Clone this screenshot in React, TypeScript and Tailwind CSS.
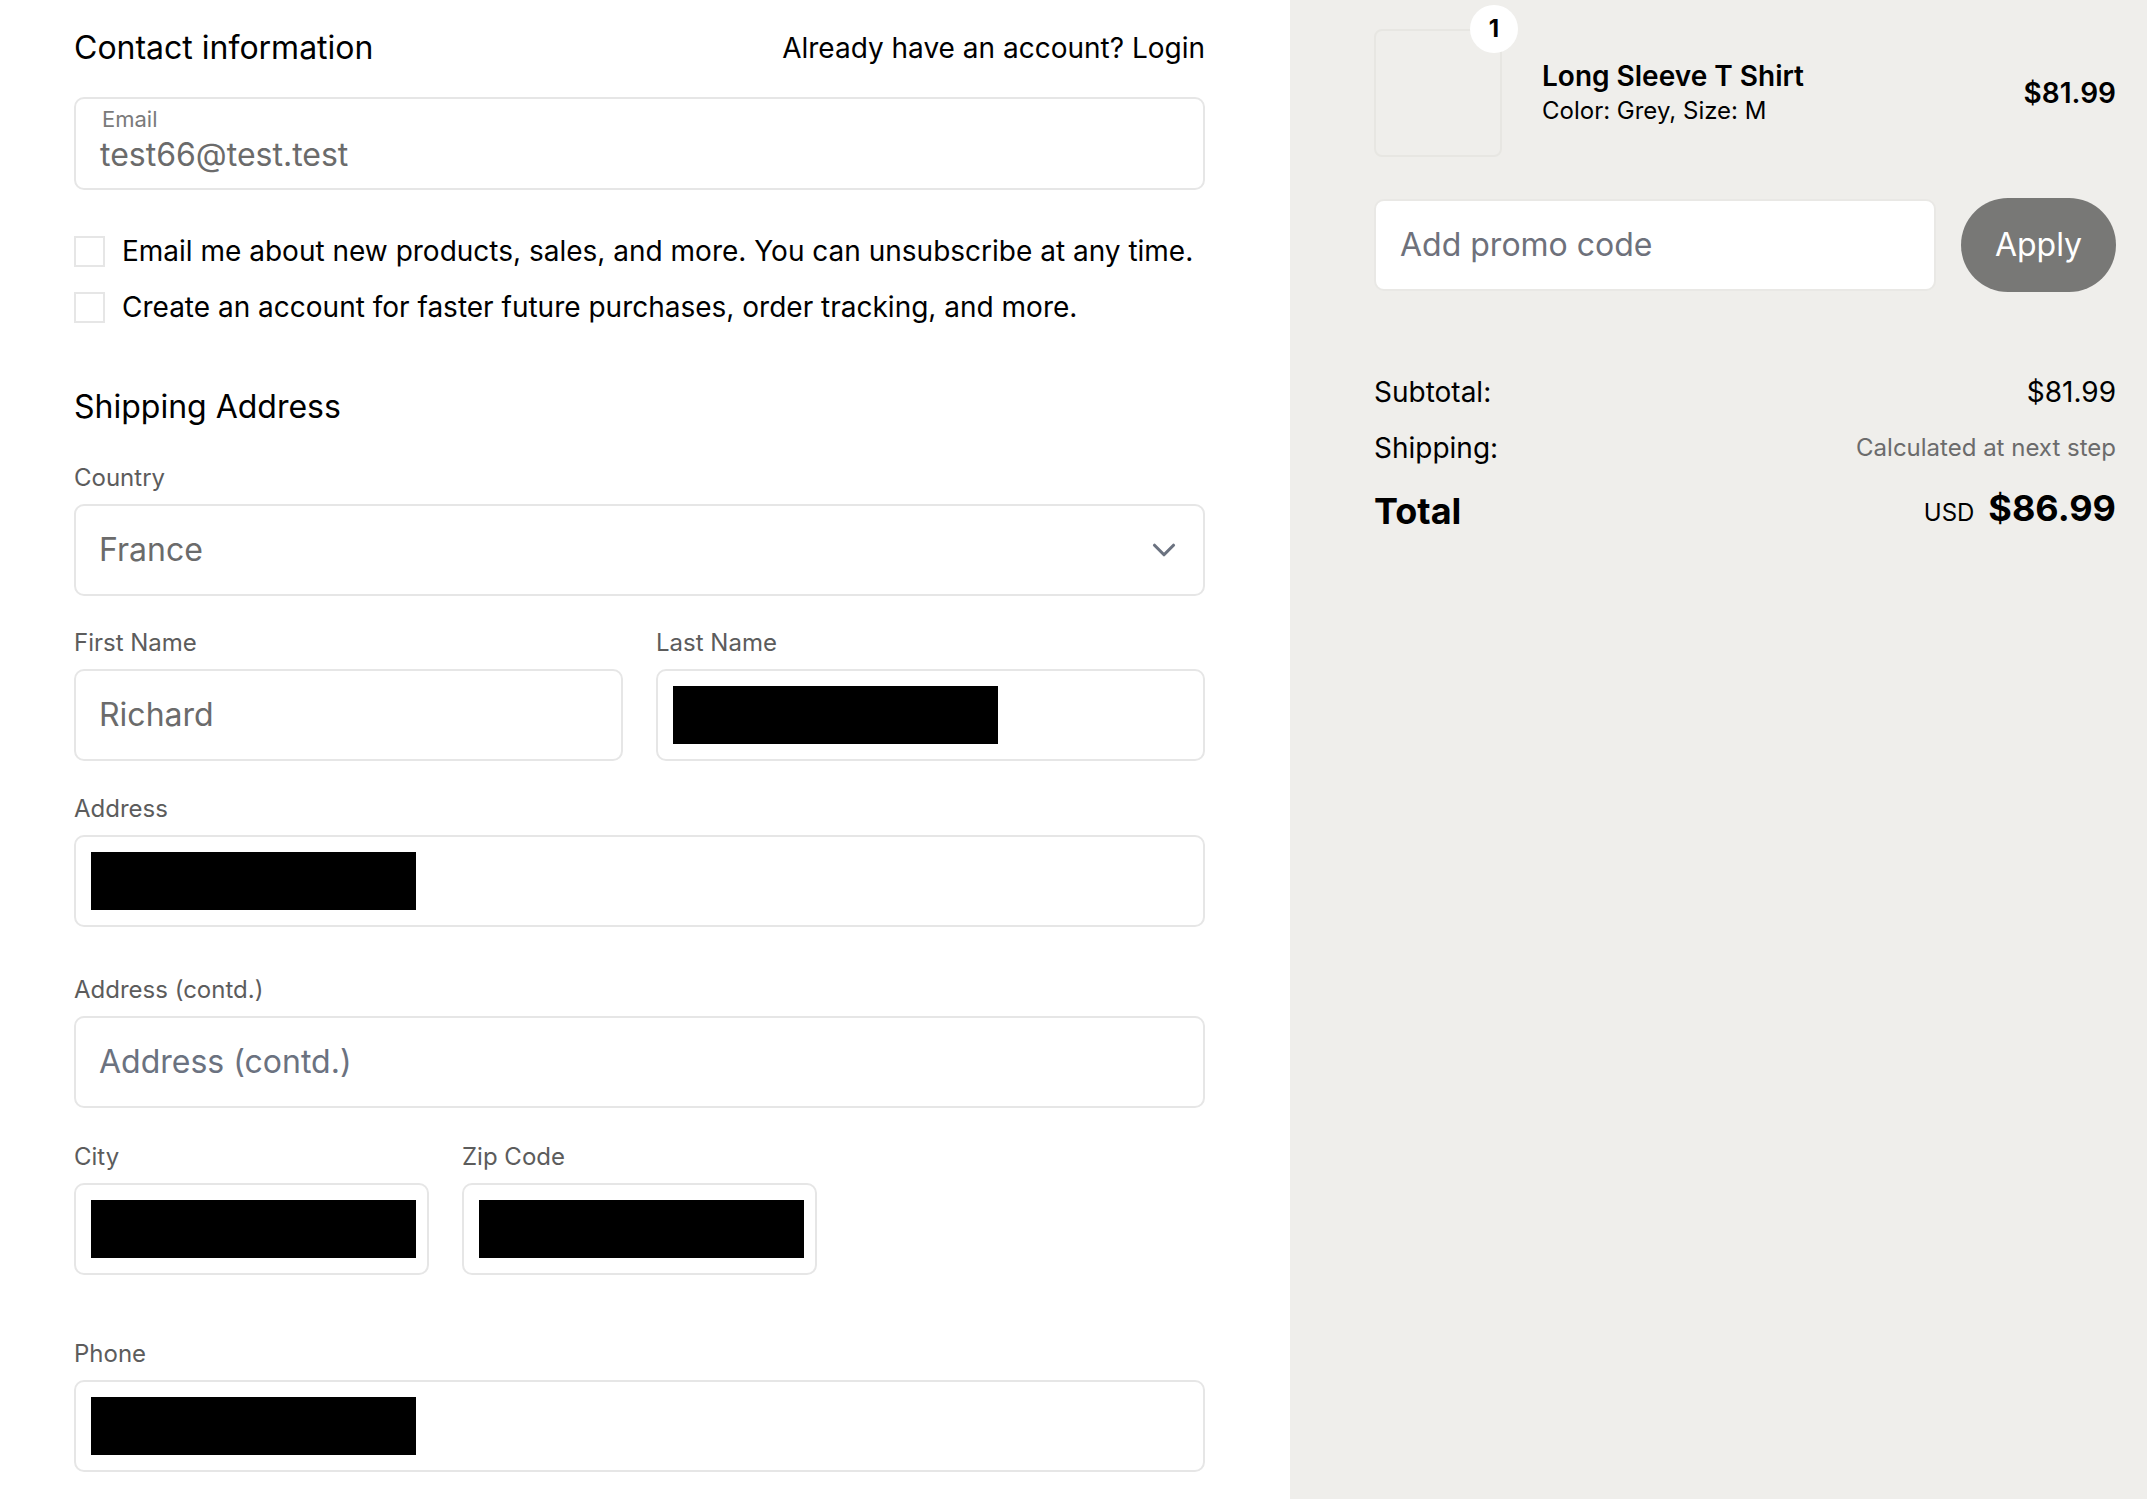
import { ChevronDown } from "lucide-react"

const font = { fontFamily: "Inter, 'Noto Sans', sans-serif" }

function Label({ children, className = "" }: { children: React.ReactNode; className?: string }) {
  return <div className={`text-[24px] leading-[28px] text-[#5c5c5c] ${className}`}>{children}</div>
}

function Box({ children, className = "" }: { children?: React.ReactNode; className?: string }) {
  return (
    <div className={`mt-[12px] flex h-[92px] items-center rounded-[10px] border-2 border-[#e6e6e6] bg-white ${className}`}>
      {children}
    </div>
  )
}

function Redacted() {
  return <div className="ml-[15px] h-[58px] w-[325px] bg-black" />
}

function Checkbox({ label }: { label: string }) {
  return (
    <label className="flex items-center gap-[17px]">
      <span className="h-[31px] w-[31px] shrink-0 border-2 border-[#e6e6e6]" />
      <span className="text-[28px] leading-[36px] text-black">{label}</span>
    </label>
  )
}

export default function App() {
  return (
    <div className="flex min-h-screen w-full" style={font}>
      {/* checkout form */}
      <div className="w-[1290px] shrink-0 bg-white pl-[74px] pr-[85px] pt-[30px] pb-[20px]">
        <div className="flex items-center justify-between">
          <h2 className="text-[32px] leading-[36px] text-black">Contact information</h2>
          <span className="text-[28px] leading-[36px] text-black">Already have an account? Login</span>
        </div>

        <div className="mt-[31px] flex h-[93px] flex-col rounded-[10px] border-2 border-[#e6e6e6] pl-[24px] pt-[7px]">
          <span className="pl-[2px] text-[22px] leading-[26px] text-[#7a7a7a]">Email</span>
          <span className="mt-[4px] text-[32px] leading-[38px] text-[#6b6b6b]">test66@test.test</span>
        </div>

        <div className="mt-[43px] flex flex-col gap-[20px]">
          <Checkbox label="Email me about new products, sales, and more. You can unsubscribe at any time." />
          <Checkbox label="Create an account for faster future purchases, order tracking, and more." />
        </div>

        <h2 className="mt-[64px] text-[32px] leading-[36px] text-black">Shipping Address</h2>

        <Label className="mt-[39px]">Country</Label>
        <Box className="justify-between pl-[23px] pr-[20px]">
          <span className="text-[32px] text-[#6b6b6b]">France</span>
          <ChevronDown className="h-[38px] w-[38px] text-[#6b7280]" strokeWidth={2} />
        </Box>

        <div className="mt-[33px] grid grid-cols-2 gap-x-[33px]">
          <div>
            <Label>First Name</Label>
            <Box className="pl-[23px]">
              <span className="text-[32px] text-[#6b6b6b]">Richard</span>
            </Box>
          </div>
          <div>
            <Label>Last Name</Label>
            <Box>
              <Redacted />
            </Box>
          </div>
        </div>

        <Label className="mt-[34px]">Address</Label>
        <Box>
          <Redacted />
        </Box>

        <Label className="mt-[49px]">Address (contd.)</Label>
        <Box className="pl-[23px]">
          <span className="text-[32px] text-[#6b7280]">Address (contd.)</span>
        </Box>

        <div className="mt-[35px] flex gap-[33px]">
          <div className="w-[355px]">
            <Label>City</Label>
            <Box>
              <Redacted />
            </Box>
          </div>
          <div className="w-[355px]">
            <Label>Zip Code</Label>
            <Box>
              <Redacted />
            </Box>
          </div>
        </div>

        <Label className="mt-[65px]">Phone</Label>
        <Box>
          <Redacted />
        </Box>
      </div>

      {/* order summary */}
      <div className="flex-1 bg-[#efeeeb] pl-[84px] pr-[31px] pt-[29px]">
        <div className="flex items-center">
          <div className="relative h-[128px] w-[128px] shrink-0 rounded-[8px] border-2 border-[#e7e6e2]">
            <span className="absolute -right-[18px] -top-[26px] flex h-[48px] w-[48px] items-center justify-center rounded-full bg-white text-[24px] font-bold text-black">
              1
            </span>
          </div>
          <div className="ml-[40px] flex flex-1 items-center justify-between">
            <div>
              <div className="text-[28px] font-semibold leading-[36px] text-black">Long Sleeve T Shirt</div>
              <div className="text-[24px] leading-[34px] text-black">Color: Grey, Size: M</div>
            </div>
            <div className="text-[28px] font-semibold text-black">$81.99</div>
          </div>
        </div>

        <div className="mt-[41px] flex items-center gap-[25px]">
          <div className="flex h-[92px] flex-1 items-center rounded-[10px] border-2 border-[#e9e8e5] bg-white pl-[24px]">
            <span className="text-[32px] text-[#6e717b]">Add promo code</span>
          </div>
          <button className="h-[94px] w-[155px] rounded-full bg-[#787876] text-[32px] text-white">Apply</button>
        </div>

        <div className="mt-[80px] flex flex-col">
          <div className="flex items-center justify-between leading-[40px]">
            <span className="text-[28px] text-black">Subtotal:</span>
            <span className="text-[28px] text-black">$81.99</span>
          </div>
          <div className="mt-[16px] flex items-center justify-between leading-[40px]">
            <span className="text-[28px] text-black">Shipping:</span>
            <span className="text-[24px] text-[#6b6b6b]">Calculated at next step</span>
          </div>
          <div className="mt-[17px] flex items-center justify-between leading-[46px]">
            <span className="text-[36px] font-bold text-black">Total</span>
            <span className="flex items-baseline gap-[14px]">
              <span className="text-[24px] text-black">USD</span>
              <span className="text-[36px] font-bold text-black">$86.99</span>
            </span>
          </div>
        </div>
      </div>
    </div>
  )
}
